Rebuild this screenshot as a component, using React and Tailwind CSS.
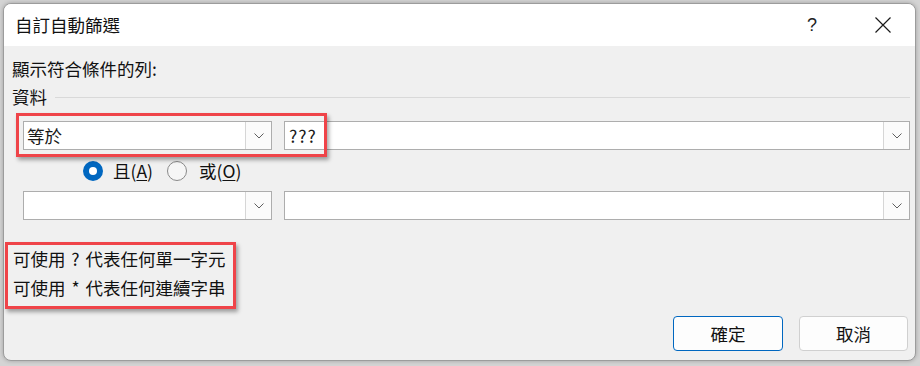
import React from 'react';

const font = { fontFamily: '"Noto Sans CJK TC", "Noto Sans", sans-serif' };

// Small Windows-style chevron inside combo boxes
const Chevron = () => (
  <svg width="10" height="6" viewBox="0 0 10 6" fill="none">
    <path d="M0.5 0.5L5 5L9.5 0.5" stroke="#5f5f5f" strokeWidth="1" />
  </svg>
);

const ComboBox = ({ value, className = '' }) => (
  <div className={`flex h-[29px] items-stretch border border-[#adadad] bg-white ${className}`}>
    <div className="flex flex-1 items-center pl-[3px] text-[17.5px] leading-none text-[#1a1a1a]">{value}</div>
    <div className="flex w-[26px] items-center justify-center border-l border-[#d6d6d6] bg-[#fbfbfb]">
      <Chevron />
    </div>
  </div>
);

const TextBox = ({ value }) => (
  <div className="flex h-[29px] flex-1 items-stretch border border-[#adadad] bg-white">
    <div className="flex w-[42px] items-center pl-[4px] text-[17.5px] leading-none tracking-[1px] text-[#1a1a1a]">{value}</div>
    <div className="flex-1" />
    <div className="flex w-[26px] items-center justify-center border-l border-[#d6d6d6] bg-[#fbfbfb]">
      <Chevron />
    </div>
  </div>
);

export default function App() {
  return (
    <div className="relative h-[366px] w-[920px] overflow-hidden bg-[#d4d4d4] pl-[3px] pt-[3px]" style={font}>
      <div className="flex h-[358px] w-[913px] flex-col overflow-hidden rounded-[8px] border border-[#9c9c9c] bg-[#f0f0f0] shadow-[0_0_4px_rgba(0,0,0,0.25)]">
        {/* Title bar */}
        <div className="flex h-[42px] shrink-0 items-center bg-white pl-[11px] text-[17.5px] text-[#111]">
          <span className="leading-none">自訂自動篩選</span>
          <div className="flex-1" />
          <span className="w-[20px] text-center text-[18px] font-light leading-none text-[#222]" style={{ fontFamily: '"Liberation Sans", sans-serif' }}>?</span>
          <div className="w-[53px]" />
          <svg width="16" height="16" viewBox="0 0 16 16" fill="none">
            <path d="M0.5 0.5L15.5 15.5M15.5 0.5L0.5 15.5" stroke="#1a1a1a" strokeWidth="1.2" />
          </svg>
          <div className="w-[24px]" />
        </div>

        {/* Body */}
        <div className="flex flex-1 flex-col pl-[8px] pr-[5px] pt-[11px] text-[17.5px] text-[#111]">
          <div className="h-[24px] leading-[24px]">顯示符合條件的列:</div>
          <div className="mt-[4px] flex h-[24px] items-center">
            <span className="leading-[24px]">資料</span>
            <div className="ml-[8px] h-px flex-1 bg-[#d9d9d9]" />
          </div>

          {/* Criteria row 1 */}
          <div className="ml-[11px] mt-[12px] flex gap-[12px]">
            <ComboBox value="等於" className="w-[249px]" />
            <TextBox value="???" />
          </div>

          {/* And / Or */}
          <div className="ml-[71px] mt-[11px] flex h-[20px] items-center">
            <span className="flex h-[20px] w-[20px] items-center justify-center rounded-full bg-[#0067c0]">
              <span className="h-[8px] w-[8px] rounded-full bg-white" />
            </span>
            <span className="ml-[10px] leading-none">且(<span className="underline underline-offset-2">A</span>)</span>
            <span className="ml-[14px] h-[20px] w-[20px] rounded-full border border-[#8a8a8a] bg-[#f6f6f6]" />
            <span className="ml-[12px] leading-none">或(<span className="underline underline-offset-2">O</span>)</span>
          </div>

          {/* Criteria row 2 */}
          <div className="ml-[11px] mt-[10px] flex gap-[12px]">
            <ComboBox value="" className="w-[249px]" />
            <TextBox value="" />
          </div>

          <div className="ml-[1px] mt-[24px] leading-[29px]">
            <div>可使用<span className="inline-block w-[20px] text-center">?</span>代表任何單一字元</div>
            <div>可使用<span className="inline-block w-[20px] text-center">*</span>代表任何連續字串</div>
          </div>

          <div className="mt-[14px] flex justify-end gap-[16px] pr-[2px]">
            <button className="h-[35px] w-[110px] rounded-[4px] border border-[#0067c0] bg-[#fdfdfd] text-[17.5px] leading-none text-[#111]">確定</button>
            <button className="h-[35px] w-[109px] rounded-[4px] border border-[#d0d0d0] bg-[#fdfdfd] text-[17.5px] leading-none text-[#111]">取消</button>
          </div>
        </div>
      </div>

      {/* Red highlight annotations */}
      <div className="absolute left-[16px] top-[113px] h-[44px] w-[311px] border-[3px] border-[#ef4449] shadow-[2px_3px_4px_rgba(0,0,0,0.35)]" />
      <div className="absolute left-[5px] top-[242px] h-[67px] w-[231px] border-[3px] border-[#ef4449] shadow-[2px_3px_4px_rgba(0,0,0,0.35)]" />
    </div>
  );
}
